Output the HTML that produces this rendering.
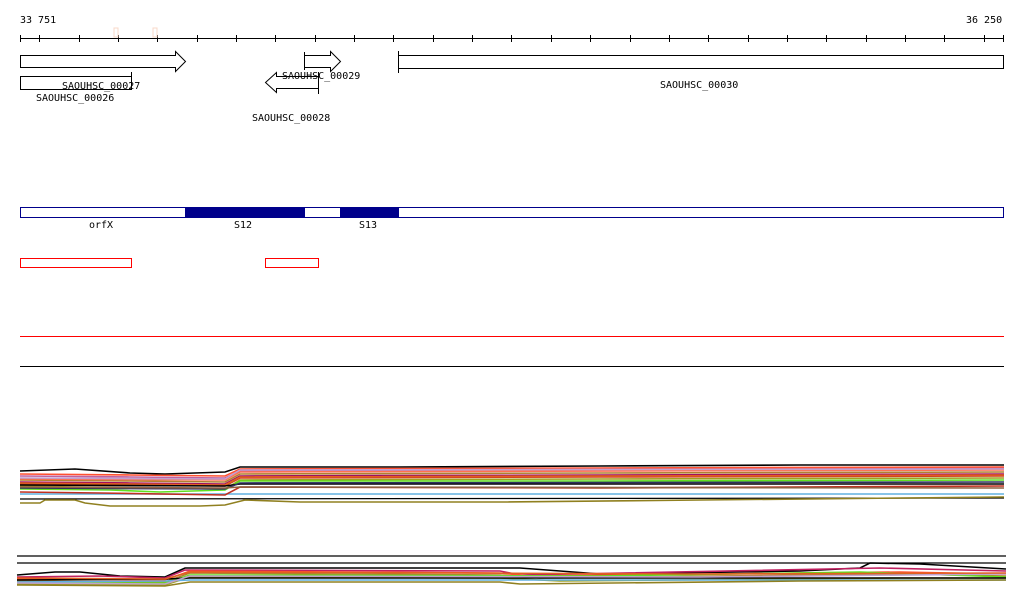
<!DOCTYPE html>
<html><head><meta charset="utf-8"><style>
html,body{margin:0;padding:0;background:#fff;}
svg{display:block;}
text{font-family:"DejaVu Sans Mono","Liberation Mono",monospace;font-size:10px;fill:#000;}
</style></head><body>
<svg width="1024" height="611" viewBox="0 0 1024 611" xmlns="http://www.w3.org/2000/svg">
<text x="20" y="23">33 751</text>
<text x="966" y="23">36 250</text>
<g stroke="#000" stroke-width="1" fill="none" shape-rendering="crispEdges">
<line x1="20" y1="38.5" x2="1004" y2="38.5"/>
<path d="M20.5 35v7M39.5 35v7M79.5 35v7M118.5 35v7M157.5 35v7M197.5 35v7M236.5 35v7M275.5 35v7M315.5 35v7M354.5 35v7M393.5 35v7M433.5 35v7M472.5 35v7M511.5 35v7M551.5 35v7M590.5 35v7M630.5 35v7M669.5 35v7M708.5 35v7M748.5 35v7M787.5 35v7M826.5 35v7M866.5 35v7M905.5 35v7M944.5 35v7M984.5 35v7M1003.5 35v7"/>
</g>
<rect x="114" y="28" width="4" height="9" fill="none" stroke="#f8d8c8"/>
<rect x="153" y="28" width="4" height="9" fill="none" stroke="#f8d8c8"/>
<g stroke="#000" stroke-width="1" fill="#fff">
<path d="M20.5 55.5H175.5V51.5L185.5 61.5L175.5 71.5V67.5H20.5Z"/>
<path d="M20.5 76.5H131.5V89.5H20.5Z"/>
<path d="M131.5 72v17"/>
<path d="M304.5 55.5H330.5V51.5L340.5 61.5L330.5 71.5V67.5H304.5Z"/>
<path d="M304.5 52v18"/>
<path d="M318.5 76.5H276.5V72.5L265.5 82.5L276.5 92.5V88.5H318.5Z"/>
<path d="M318.5 72v22"/>
<path d="M398.5 55.5H1003.5V68.5H398.5Z"/>
<path d="M398.5 51v22"/>
</g>
<text x="62" y="89">SAOUHSC_00027</text>
<text x="36" y="101">SAOUHSC_00026</text>
<text x="282" y="79">SAOUHSC_00029</text>
<text x="252" y="121">SAOUHSC_00028</text>
<text x="660" y="88">SAOUHSC_00030</text>
<rect x="20.5" y="207.5" width="983" height="10" fill="#fff" stroke="#00008b"/>
<rect x="185" y="207" width="120" height="11" fill="#00008b"/>
<rect x="340" y="207" width="59" height="11" fill="#00008b"/>
<text x="89" y="228">orfX</text>
<text x="234" y="228">S12</text>
<text x="359" y="228">S13</text>
<rect x="20.5" y="258.5" width="111" height="9" fill="none" stroke="#f00"/>
<rect x="265.5" y="258.5" width="53" height="9" fill="none" stroke="#f00"/>
<line x1="20" y1="336.5" x2="1004" y2="336.5" stroke="#f00"/>
<line x1="20" y1="366.5" x2="1004" y2="366.5" stroke="#000"/>
<g fill="none" stroke-width="1.6">
<polyline stroke="#000" points="20,471 75,469 130,473 165,474 225,472 240,467 400,467 600,466 800,465 1004,465"/>
<polyline stroke="#c060a0" points="20,476 130,477 225,478 240,471 500,470 700,469 1004,468"/>
<polyline stroke="#ff5030" points="20,474 130,475 225,476 240,469 600,468 1004,467"/>
<polyline stroke="#b08030" points="20,480 130,481 225,482 240,474 600,473 1004,472"/>
<polyline stroke="#a01060" points="20,482 130,483 225,484 240,476 600,475 1004,474"/>
<polyline stroke="#d04020" points="20,484 140,485 225,486 240,478 600,477 1004,476"/>
<polyline stroke="#a0a020" points="20,486 130,488 225,489 240,480 600,479 1004,478"/>
<polyline stroke="#60e020" points="20,489 110,490 160,492 225,490 240,481 600,481 1004,480"/>
<polyline stroke="#ff7050" points="20,479 225,480 240,472 1004,470"/>
<polyline stroke="#c0a0d0" points="20,478 225,479 240,470 1004,469"/>
<polyline stroke="#e06020" points="20,483 225,485 240,477 1004,475"/>
<polyline stroke="#000" points="20,485 225,486 240,484 1004,484"/>
<polyline stroke="#60b0e0" points="20,494 225,494 240,494 1004,494"/>
<polyline stroke="#c03020" points="20,492 100,493 225,495 240,487 600,488 1004,486"/>
<polyline stroke="#303060" points="20,488 225,489 240,483 1004,482"/>
<polyline stroke="#000" stroke-width="1.2" points="20,499 1004,498"/>
<polyline stroke="#908020" points="20,503 40,503 45,500 75,500 85,503 110,506 200,506 225,505 245,500 300,502 500,502 700,500 1004,497"/>
<polyline stroke="#906040" points="20,487 225,488 240,487 1004,488"/>
</g>
<line x1="17" y1="556" x2="1006" y2="556" stroke="#000" stroke-width="1.2"/>
<line x1="17" y1="563" x2="1006" y2="563" stroke="#000" stroke-width="1.2"/>
<g fill="none" stroke-width="1.6">
<polyline stroke="#000" points="17,575 55,572 80,572 120,576 165,577 185,568 250,568 520,568 600,574 800,571 860,568 870,563 920,564 1006,569"/>
<polyline stroke="#c02060" points="17,577 100,576 165,578 185,570 500,571 520,575 880,568 1006,571"/>
<polyline stroke="#ff5030" points="17,579 165,580 190,571 500,573 530,576 900,572 1006,574"/>
<polyline stroke="#b08030" points="17,581 165,582 190,573 500,575 540,578 900,574 1006,576"/>
<polyline stroke="#60e020" points="17,583 165,583 190,575 600,576 860,572 1006,577"/>
<polyline stroke="#a0a020" points="17,584 165,585 190,577 500,578 560,581 900,578 1006,578"/>
<polyline stroke="#000" points="17,580 165,579 190,578 1006,578"/>
<polyline stroke="#60b0e0" points="17,582 165,581 190,580 1006,580"/>
<polyline stroke="#908020" points="17,585 165,586 190,582 500,582 520,584 800,581 1006,580"/>
<polyline stroke="#c0a0d0" points="17,583 165,584 190,576 700,577 1006,574"/>
<polyline stroke="#e06020" points="17,578 165,579 190,572 700,574 1006,573"/>
</g>
</svg>
</body></html>
